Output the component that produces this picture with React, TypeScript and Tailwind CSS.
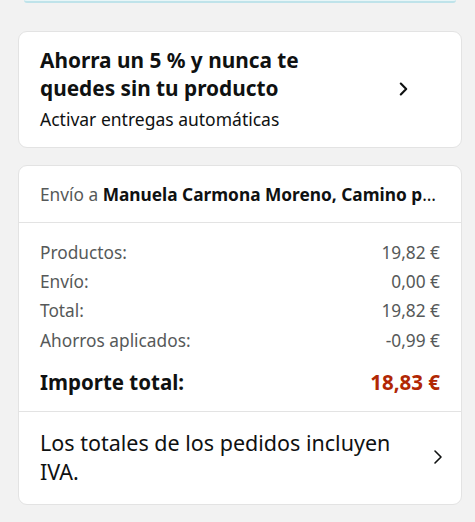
import React from "react";

const Chevron = ({ className, strokeWidth }: { className?: string; strokeWidth: number }) => (
  <svg viewBox="0 0 10 16" className={className} fill="none" stroke="currentColor" strokeWidth={strokeWidth} strokeLinecap="round" strokeLinejoin="round">
    <path d="M2 2 L8 8 L2 14" />
  </svg>
);

const Row = ({ label, value }: { label: string; value: string }) => (
  <div className="flex justify-between items-center h-[29.3px] text-[17.3px] text-[#565959]">
    <span>{label}</span>
    <span>{value}</span>
  </div>
);

export default function App() {
  return (
    <div className="w-[475px] h-[522px] bg-[#f2f2f2] overflow-hidden text-[#0f1111]" style={{ fontFamily: '"Noto Sans", "Open Sans", sans-serif' }}>
      <div className="ml-[24px] mr-[19px] h-[3px] bg-[#e8f6f8] border-b-2 border-[#bfe3ea] rounded-b-[3px]" />
      <div className="ml-[18px] mr-[13px] mt-[28px] bg-white border border-[#e3e3e3] rounded-[9px] pl-[21px] pr-[53px] pt-[14px] pb-[16px] flex items-center justify-between">
        <div>
          <div className="text-[20.8px] font-bold leading-[28px]">
            Ahorra un 5 % y nunca te
            <br />
            quedes sin tu producto
          </div>
          <div className="text-[17.5px] leading-[24px] mt-[5px]">Activar entregas automáticas</div>
        </div>
        <Chevron className="w-[9px] h-[16px]" strokeWidth={2.4} />
      </div>
      <div className="ml-[18px] mr-[13px] mt-[17px] bg-white border border-[#e3e3e3] rounded-[9px]">
        <div className="h-[57px] border-b border-[#e3e3e3] flex items-center px-[21px] pt-[1px]">
          <div className="truncate text-[17.3px]">
            <span className="text-[#565959]">Envío a </span>
            <span className="font-bold">Manuela Carmona Moreno, Camino pinar 12, Madrid</span>
          </div>
        </div>
        <div className="px-[21px] pt-[15px] pb-[15px] border-b border-[#e3e3e3]">
          <Row label="Productos:" value="19,82 €" />
          <Row label="Envío:" value="0,00 €" />
          <Row label="Total:" value="19,82 €" />
          <Row label="Ahorros aplicados:" value="-0,99 €" />
          <div className="flex justify-between items-center h-[28px] mt-[13px] text-[20.5px] font-bold">
            <span>Importe total:</span>
            <span className="text-[#b12704]">18,83 €</span>
          </div>
        </div>
        <div className="flex items-center justify-between pl-[21px] pr-[18px] pt-[16px] pb-[18px]">
          <div className="text-[21.5px] leading-[29px] w-[370px]">Los totales de los pedidos incluyen IVA.</div>
          <Chevron className="w-[10px] h-[16px]" strokeWidth={1.6} />
        </div>
      </div>
    </div>
  );
}
